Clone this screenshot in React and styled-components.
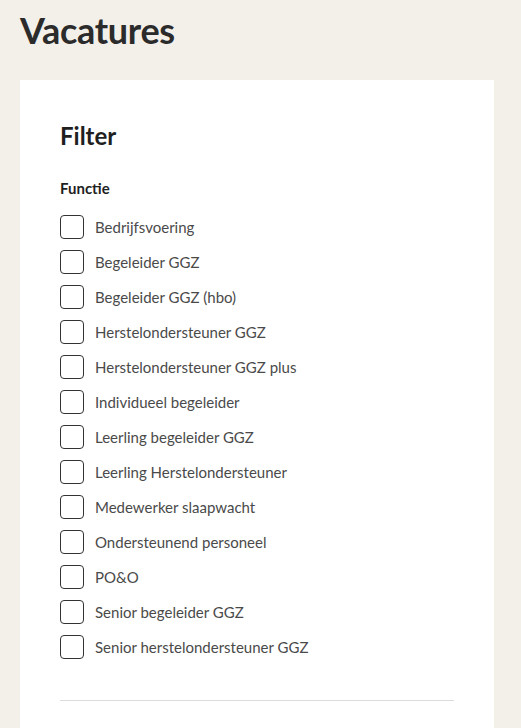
import React from "react";
import styled, { createGlobalStyle } from "styled-components";

const GlobalStyle = createGlobalStyle`
  html, body {
    margin: 0;
    padding: 0;
    background: #f3f0e9;
    font-family: Lato, "Noto Sans", sans-serif;
  }
`;

const FUNCTIES = [
  "Bedrijfsvoering",
  "Begeleider GGZ",
  "Begeleider GGZ (hbo)",
  "Herstelondersteuner GGZ",
  "Herstelondersteuner GGZ plus",
  "Individueel begeleider",
  "Leerling begeleider GGZ",
  "Leerling Herstelondersteuner",
  "Medewerker slaapwacht",
  "Ondersteunend personeel",
  "PO&O",
  "Senior begeleider GGZ",
  "Senior herstelondersteuner GGZ",
];

const Page = styled.div`
  padding: 8px 27px 0 20px;
`;

const Title = styled.h1`
  margin: 0;
  font-size: 36px;
  line-height: 44px;
  font-weight: 700;
  color: #2b2b2b;
  letter-spacing: -0.3px;
`;

const Card = styled.section`
  margin-top: 28px;
  background: #fff;
  padding: 40px 40px 0;
  height: 648px;
  box-sizing: border-box;
  overflow: hidden;
`;

const CardTitle = styled.h2`
  margin: 0;
  font-size: 24px;
  line-height: 32px;
  font-weight: 700;
  color: #1f1f1f;
`;

const GroupTitle = styled.h3`
  margin: 26px 0 0;
  font-size: 15px;
  line-height: 20px;
  font-weight: 700;
  color: #1f1f1f;
`;

const List = styled.ul`
  list-style: none;
  margin: 17px 0 0;
  padding: 0;
  display: flex;
  flex-direction: column;
  gap: 11px;
`;

const Row = styled.li`
  display: flex;
  align-items: center;
  gap: 11px;
  height: 24px;
  cursor: pointer;
`;

const Box = styled.span`
  width: 24px;
  height: 24px;
  box-sizing: border-box;
  border: 1.5px solid #333;
  border-radius: 4px;
  flex: none;
`;

const Label = styled.span`
  font-size: 15px;
  color: #4a4a4a;
`;

const Divider = styled.hr`
  margin: 41px 0 0;
  border: none;
  border-top: 1px solid #dcdcdc;
`;

export default function App() {
  return (
    <>
      <GlobalStyle />
      <Page>
        <Title>Vacatures</Title>
        <Card>
          <CardTitle>Filter</CardTitle>
          <GroupTitle>Functie</GroupTitle>
          <List>
            {FUNCTIES.map((f) => (
              <Row key={f}>
                <Box />
                <Label>{f}</Label>
              </Row>
            ))}
          </List>
          <Divider />
        </Card>
      </Page>
    </>
  );
}
